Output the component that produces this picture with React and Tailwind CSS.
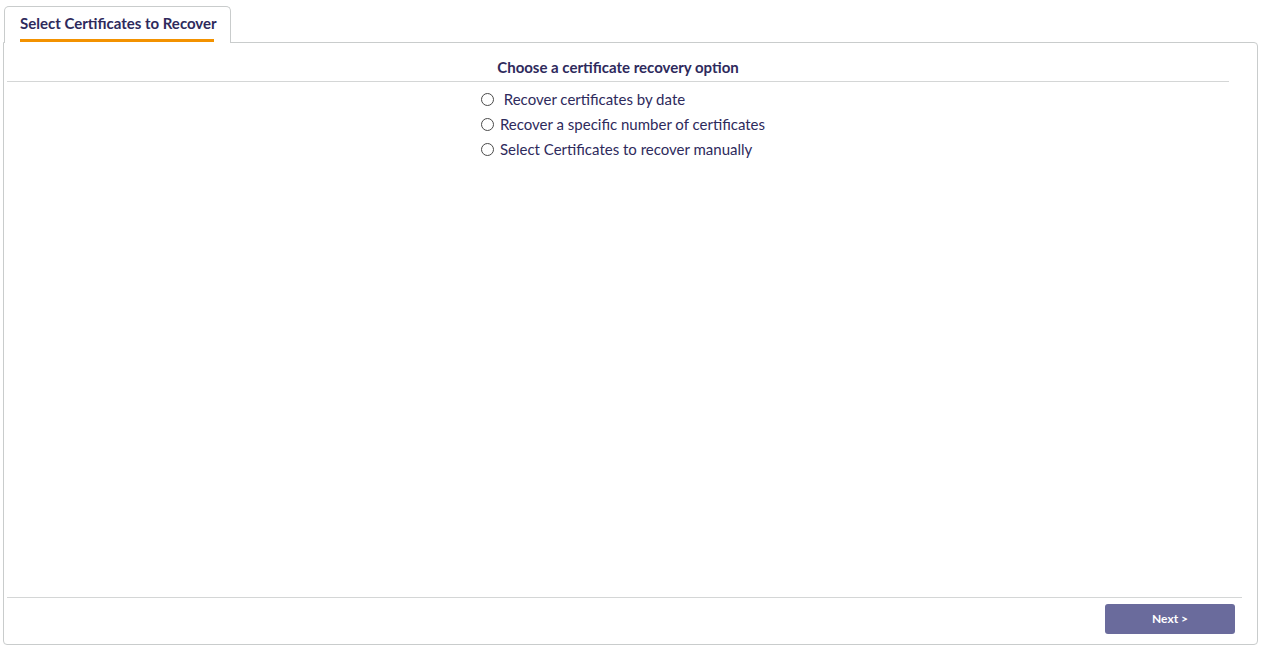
import React, { useState } from 'react';

const OPTIONS = [
  { id: 'date', label: ' Recover certificates by date' },
  { id: 'count', label: 'Recover a specific number of certificates' },
  { id: 'manual', label: 'Select Certificates to recover manually' }
];

export default function App() {
  const [choice, setChoice] = useState(null);

  return (
    <div className="w-[1261px] h-[648px] bg-white text-[#2e2a5c] font-['Lato',_'Liberation_Sans',_sans-serif] pt-[6px] pl-[3px] pr-[3px] flex flex-col">
      {/* Tab strip */}
      <div className="flex">
        <div className="ml-[1px] w-[227px] h-[37px] border border-b-0 border-[#c9cccc] rounded-t-[5px] bg-white relative z-10 -mb-px px-[15px] pt-[7px]">
          <div className="text-[15px] font-bold leading-[18px] whitespace-nowrap">Select Certificates to Recover</div>
          <div className="mt-[7px] h-[3px] bg-[#f39200] w-[194px]" />
        </div>
      </div>

      {/* Panel */}
      <div className="flex-1 mb-[3px] border border-[#c9cccc] rounded-b-[4px] rounded-tr-[4px] flex flex-col px-[3px]">
        <div className="mr-[25px] border-b border-[#d4d6d6] h-[39px] flex items-end justify-center pb-[5px]">
          <span className="text-[15px] font-bold leading-[18px]">Choose a certificate recovery option</span>
        </div>

        <div className="flex-1 flex justify-center pt-[4px] pr-[15px]">
          <div className="flex flex-col">
            {OPTIONS.map((o) => (
              <label key={o.id} className="flex items-center h-[25px] cursor-pointer">
                <input
                  type="radio"
                  name="recover"
                  checked={choice === o.id}
                  onChange={() => setChoice(o.id)}
                  className="appearance-none w-[13px] h-[13px] mt-[2px] rounded-full border border-[#4a4a4a] bg-white mr-[6px] checked:border-[4px] checked:border-[#2e2a5c]"
                />
                <span className="text-[15px] leading-[18px] whitespace-pre">{o.label}</span>
              </label>
            ))}
          </div>
        </div>

        <div className="border-t border-[#d4d6d6] mr-[12px] flex justify-end pt-[6px] pb-[10px]">
          <button className="mr-[7px] w-[130px] h-[30px] rounded-[3px] bg-[#6a6b9c] text-white text-[12px] font-bold">
            Next &gt;
          </button>
        </div>
      </div>
    </div>
  );
}
